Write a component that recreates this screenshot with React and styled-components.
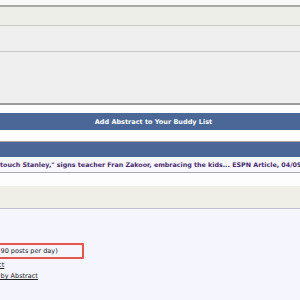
import React from 'react';
import styled, { createGlobalStyle } from 'styled-components';

const GlobalStyle = createGlobalStyle`
  html, body {
    margin: 0;
    padding: 0;
    background: #fbfbfb;
  }
  body {
    font-family: "DejaVu Sans", Verdana, sans-serif;
  }
`;

const Page = styled.div`
  width: 300px;
  height: 300px;
  overflow: hidden;
  display: flex;
  flex-direction: column;
`;

const TopStrip = styled.div`
  height: 5px;
  flex-shrink: 0;
  background: #f8f8f8;
  border-bottom: 2px solid #a8a8a8;
`;

const Band = styled.div`
  height: ${p => p.h}px;
  flex-shrink: 0;
  background: ${p => p.bg || '#efefef'};
  border-bottom: ${p => p.line || '1px solid #c8c8c8'};
`;

const Spacer = styled.div`
  height: ${p => p.h}px;
  flex-shrink: 0;
  background: #fdfdfd;
  border-bottom: ${p => p.line || 'none'};
`;

const BlueBar = styled.div`
  height: ${p => p.h}px;
  flex-shrink: 0;
  background: #4b6797;
  color: #fff;
  font-weight: bold;
  font-size: 6.5px;
  display: flex;
  align-items: center;
  justify-content: center;
  padding-left: 7px;
`;

const ArticleRow = styled.div`
  height: 15px;
  flex-shrink: 0;
  background: #f7f7fd;
  border-bottom: 1px solid #a9a9ad;
  color: #4a2b6f;
  font-weight: bold;
  font-size: 6.35px;
  white-space: nowrap;
  display: flex;
  align-items: center;
  overflow: hidden;
`;

const StatsPanel = styled.div`
  height: 87px;
  flex-shrink: 0;
  background: #f5f5fd;
  border-top: 1px solid #c3c2d2;
  border-bottom: 2px solid #555;
  padding-top: 34px;
  box-sizing: content-box;
  font-size: 6.5px;
  color: #222;
  display: flex;
  flex-direction: column;
  align-items: flex-start;
`;

const Highlight = styled.div`
  margin-left: -8px;
  width: 84px;
  height: 12px;
  border: 2px solid #e1574b;
  border-radius: 1px;
  display: flex;
  align-items: center;
  padding-left: 4px;
  white-space: nowrap;
`;

const Line = styled.div`
  white-space: nowrap;
  margin-left: ${p => p.shift || 0}px;
  margin-top: ${p => p.mt || 0}px;
  line-height: 11px;
`;

const Link = styled.a`
  color: #222;
  text-decoration: underline;
`;

const Bottom = styled.div`
  flex: 1;
  background: #e2e2e2;
`;

export default function App() {
  return (
    <Page>
      <GlobalStyle />
      <TopStrip />
      <Band h={18} bg="#eeeee8" />
      <Band h={25} />
      <Band h={51} line="2px solid #9a9a9a" />
      <Spacer h={8} />
      <BlueBar h={17}>Add Abstract to Your Buddy List</BlueBar>
      <Spacer h={11} line="1px solid #a9a9a9" />
      <BlueBar h={15} />
      <ArticleRow>
        touch Stanley," signs teacher Fran Zakoor, embracing the kids... ESPN Article, 04/09/2006
      </ArticleRow>
      <Spacer h={13} />
      <Band h={22} bg="#efefe7" line="none" />
      <StatsPanel>
        <Highlight>(90 posts per day)</Highlight>
        <Line shift={-39} mt={1}>
          Visit <Link href="#">Abstract</Link>
        </Line>
        <Line shift={-44}>
          <Link href="#">Find all posts by Abstract</Link>
        </Line>
      </StatsPanel>
      <Bottom />
    </Page>
  );
}
